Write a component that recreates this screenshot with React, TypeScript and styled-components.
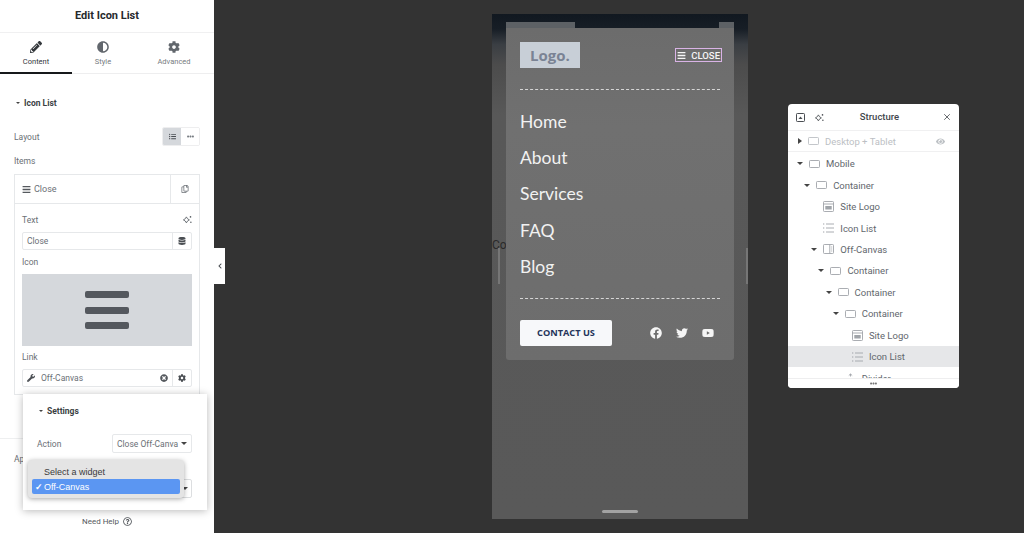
import React from "react";
import styled, { createGlobalStyle } from "styled-components";
import { X } from "lucide-react";
import {
  FaAdjust,
  FaBars,
  FaCog,
  FaDatabase,
  FaEllipsisH,
  FaEye,
  FaFacebook,
  FaListUl,
  FaPencilAlt,
  FaRegCopy,
  FaRegQuestionCircle,
  FaTimesCircle,
  FaTwitter,
  FaWrench,
  FaYoutube,
  FaChevronLeft,
} from "react-icons/fa";

const GlobalStyle = createGlobalStyle`
  html, body {
    margin: 0;
    padding: 0;
    background: #333333;
  }
  * {
    box-sizing: border-box;
  }
`;

const Page = styled.div`
  width: 1024px;
  height: 533px;
  display: flex;
  overflow: hidden;
  font-family: Roboto, "Liberation Sans", sans-serif;
  color: #555b61;
`;

/* ---------- left editor panel ---------- */

const Sidebar = styled.aside`
  position: relative;
  width: 214px;
  flex-shrink: 0;
  background: #ffffff;
  display: flex;
  flex-direction: column;
  overflow: hidden;
`;

const PanelTitle = styled.div`
  height: 33px;
  display: flex;
  align-items: center;
  justify-content: center;
  padding-bottom: 2px;
  font-size: 11px;
  font-weight: 700;
  color: #26292c;
  border-bottom: 1px solid #f0f0f1;
`;

const Tabs = styled.div`
  height: 41px;
  display: grid;
  grid-template-columns: 72px 62px 80px;
  border-bottom: 1px solid #eeeeef;
`;

const Tab = styled.div<{ $active?: boolean }>`
  display: flex;
  flex-direction: column;
  align-items: center;
  padding-top: 8px;
  gap: 4px;
  font-size: 7.5px;
  color: ${(p) => (p.$active ? "#33373b" : "#777c82")};
  border-bottom: 2px solid ${(p) => (p.$active ? "#17191b" : "transparent")};
  height: 41px;
  svg {
    font-size: 12px;
    color: ${(p) => (p.$active ? "#33373b" : "#62676d")};
  }
`;

const PanelBody = styled.div`
  padding: 23px 14px 0;
  display: flex;
  flex-direction: column;
`;

const SectionTitle = styled.div`
  height: 12px;
  display: flex;
  align-items: center;
  gap: 4px;
  padding-left: 2px;
  font-size: 8.5px;
  font-weight: 700;
  color: #3b3f44;
`;

const Caret = styled.span<{ $dir?: "down" | "right"; $size?: number }>`
  display: inline-block;
  flex-shrink: 0;
  width: 0;
  height: 0;
  ${(p) =>
    p.$dir === "right"
      ? `border-top: 3.5px solid transparent; border-bottom: 3.5px solid transparent; border-left: 4px solid #444;`
      : `border-left: ${p.$size ?? 2.5}px solid transparent; border-right: ${p.$size ?? 2.5}px solid transparent; border-top: ${p.$size ?? 2.5}px solid #444;`}
`;

const Label = styled.div`
  font-size: 8.5px;
  color: #6b7076;
  line-height: 12px;
`;

const LayoutRow = styled.div`
  display: flex;
  align-items: center;
  justify-content: space-between;
  margin-top: 18px;
  height: 19px;
`;

const ButtonGroup = styled.div`
  display: flex;
  width: 38px;
  height: 19px;
  border: 1px solid #eeeeef;
  border-radius: 2px;
  overflow: hidden;
`;

const GroupButton = styled.div<{ $active?: boolean }>`
  flex: 1;
  display: flex;
  align-items: center;
  justify-content: center;
  font-size: 7px;
  color: ${(p) => (p.$active ? "#4a4e53" : "#777c82")};
  background: ${(p) => (p.$active ? "#d5d8dc" : "#ffffff")};
`;

const ItemsLabel = styled(Label)`
  margin-top: 9px;
`;

const Repeater = styled.div`
  margin-top: 7px;
  height: 221px;
  border: 1px solid #e6e8ea;
  display: flex;
  flex-direction: column;
`;

const RepeaterHead = styled.div`
  height: 29px;
  flex-shrink: 0;
  display: flex;
  align-items: center;
  border-bottom: 1px solid #e6e8ea;
  font-size: 9px;
  color: #6b7076;
`;

const RepeaterName = styled.div`
  flex: 1;
  display: flex;
  align-items: center;
  gap: 3px;
  padding-left: 7px;
  svg {
    font-size: 9px;
    color: #55595e;
  }
`;

const RepeaterAction = styled.div`
  width: 29px;
  height: 100%;
  display: flex;
  align-items: center;
  justify-content: center;
  border-left: 1px solid #e6e8ea;
  font-size: 8px;
  color: #6b7076;
`;

const RepeaterBody = styled.div`
  padding: 9px 7px 0;
  display: flex;
  flex-direction: column;
`;

const FieldHead = styled.div`
  display: flex;
  align-items: center;
  justify-content: space-between;
  height: 13px;
`;

const Field = styled.div`
  margin-top: 6px;
  height: 18px;
  display: flex;
  align-items: center;
  border: 1px solid #e6e8ea;
  border-radius: 2px;
  font-size: 8.5px;
  color: #6b7076;
`;

const FieldText = styled.div`
  flex: 1;
  display: flex;
  align-items: center;
  gap: 6px;
  padding-left: 4px;
  svg {
    font-size: 8px;
    color: #4a4e53;
  }
`;

const FieldAction = styled.div`
  width: 19px;
  height: 100%;
  display: flex;
  align-items: center;
  justify-content: center;
  border-left: 1px solid #e6e8ea;
  font-size: 8px;
  color: #4a4e53;
`;

const ClearIcon = styled(FaTimesCircle)`
  font-size: 8px;
  color: #55595e;
  margin-right: 4px;
`;

const IconLabel = styled(Label)`
  margin-top: 6px;
`;

const LinkLabel = styled(Label)`
  margin-top: 5px;
`;

const IconPreview = styled.div`
  margin-top: 6px;
  height: 72px;
  background: #d5d8dc;
  display: flex;
  flex-direction: column;
  align-items: center;
  justify-content: center;
  gap: 8.5px;
`;

const PreviewBar = styled.div`
  width: 44px;
  height: 7px;
  border-radius: 2px;
  background: #54585e;
`;

const LowerRule = styled.div`
  margin-top: 43px;
  margin-left: -14px;
  border-top: 1px solid #eeeff0;
`;

const ApplyLabel = styled(Label)`
  margin-top: 14px;
  white-space: nowrap;
`;

const HelpLink = styled.div`
  position: absolute;
  left: 0;
  right: 0;
  top: 517px;
  display: flex;
  justify-content: center;
  align-items: center;
  gap: 4px;
  font-size: 8px;
  color: #55595e;
  svg {
    font-size: 9px;
  }
`;

const Popover = styled.div`
  position: absolute;
  left: 23px;
  top: 394px;
  width: 184px;
  height: 116px;
  background: #ffffff;
  box-shadow: 0 1px 8px rgba(0, 0, 0, 0.28);
  padding: 11px 15px 0 14px;
  z-index: 2;
`;

const ActionRow = styled.div`
  margin-top: 17px;
  height: 19px;
  display: flex;
  align-items: center;
  justify-content: space-between;
`;

const SelectBox = styled.div`
  width: 80px;
  height: 19px;
  display: flex;
  align-items: center;
  justify-content: space-between;
  padding: 0 4px;
  border: 1px solid #e6e8ea;
  border-radius: 2px;
  font-size: 8.5px;
  color: #6b7076;
  white-space: nowrap;
  overflow: hidden;
`;

const WidgetSelect = styled.div`
  margin-top: 26px;
  height: 19px;
  border: 1px solid #dcdee0;
  border-radius: 2px;
  display: flex;
  align-items: center;
  justify-content: flex-end;
  padding-right: 3px;
`;

const NativeMenu = styled.div`
  position: absolute;
  left: 5px;
  top: 66px;
  width: 156px;
  height: 38px;
  padding: 4px;
  border-radius: 4px;
  background: #e4e4e4;
  box-shadow: 0 1px 5px rgba(0, 0, 0, 0.35);
  font-size: 9px;
  font-family: "Liberation Sans", Arial, sans-serif;
  color: #3a3a3a;
`;

const NativeOption = styled.div<{ $selected?: boolean }>`
  height: 15px;
  display: flex;
  align-items: center;
  padding-left: 12px;
  position: relative;
  border-radius: 2px;
  color: ${(p) => (p.$selected ? "#ffffff" : "#3a3a3a")};
  background: ${(p) => (p.$selected ? "#5b96f2" : "transparent")};
`;

const CheckMark = styled.span`
  position: absolute;
  left: 3px;
  font-weight: 700;
`;

/* ---------- collapse tab ---------- */

const CollapseTab = styled.div`
  position: absolute;
  left: 214px;
  top: 248px;
  width: 11px;
  height: 36px;
  background: #ffffff;
  display: flex;
  align-items: center;
  justify-content: center;
  font-size: 6px;
  color: #4a4e53;
  z-index: 3;
`;

/* ---------- canvas and phone preview ---------- */

const Canvas = styled.main`
  flex: 1;
  display: flex;
  justify-content: center;
  padding: 14px 0 0 2px;
  background: #333333;
`;

const Phone = styled.div`
  position: relative;
  width: 256px;
  height: 505px;
  padding: 14px 14px 0;
  background: linear-gradient(#111820 0, #171e26 3%, #3a3e43 6%, #4c4c4c 10%, #585858 20%, #595959 100%);
`;

const OverflowText = styled.span`
  position: absolute;
  left: 0;
  top: 224px;
  font-size: 12px;
  line-height: 14px;
  color: #2a2a2a;
`;

const ScrollHandle = styled.div<{ $side: "left" | "right" }>`
  position: absolute;
  top: 234px;
  ${(p) => (p.$side === "left" ? "left: 6px;" : "right: 0;")}
  width: 2px;
  height: 36px;
  background: #767676;
`;

const HomeBar = styled.div`
  position: absolute;
  left: 110px;
  bottom: 6px;
  width: 36px;
  height: 3px;
  border-radius: 2px;
  background: #a2a2a2;
`;

const OffCanvas = styled.div`
  position: relative;
  width: 228px;
  height: 332px;
  padding: 14px;
  border-radius: 0 0 3px 3px;
  background: linear-gradient(#6c6c6c, #707070 30%, #6d6d6d);

  &::before,
  &::after {
    content: "";
    position: absolute;
    top: -6px;
    height: 6px;
    background: #5d6165;
  }
  &::before {
    left: 0;
    width: 69px;
  }
  &::after {
    right: 0;
    width: 15px;
  }
`;

const TopRow = styled.div`
  display: flex;
  align-items: center;
  justify-content: space-between;
`;

const LogoBox = styled.div`
  width: 60px;
  height: 26px;
  background: #c8cfd7;
  display: flex;
  align-items: center;
  justify-content: center;
  font-family: "Open Sans", sans-serif;
  font-weight: 700;
  font-size: 15px;
  color: #7a8394;
`;

const CloseButton = styled.div`
  width: 47px;
  height: 14px;
  margin-right: -2px;
  display: flex;
  align-items: center;
  justify-content: space-between;
  padding: 0 1px;
  border: 1px solid #d9b3e6;
  font-size: 9.5px;
  font-weight: 500;
  color: #f5f5f5;
  svg {
    font-size: 9px;
  }
`;

const DashedRule = styled.div`
  border-top: 1px dashed #d6d6d6;
`;

const TopRule = styled(DashedRule)`
  margin-top: 21px;
`;

const BottomRule = styled(DashedRule)`
  margin-top: 13px;
`;

const Menu = styled.nav`
  margin-top: 13px;
  display: flex;
  flex-direction: column;
`;

const MenuItem = styled.div`
  height: 36.4px;
  display: flex;
  align-items: center;
  font-family: Lato, sans-serif;
  font-size: 17.5px;
  color: #f2f2f2;
`;

const FooterRow = styled.div`
  margin-top: 21px;
  display: flex;
  align-items: center;
  justify-content: space-between;
`;

const ContactButton = styled.div`
  width: 92px;
  height: 26px;
  border-radius: 2px;
  background: #f7f8fa;
  display: flex;
  align-items: center;
  justify-content: center;
  font-family: "Open Sans", sans-serif;
  font-size: 9.2px;
  font-weight: 700;
  color: #24345a;
`;

const Socials = styled.div`
  display: flex;
  align-items: center;
  gap: 14px;
  padding-right: 6px;
  font-size: 12px;
  color: #f5f5f5;
`;

/* ---------- structure window ---------- */

const StructureWindow = styled.section`
  position: absolute;
  left: 788px;
  top: 104px;
  width: 171px;
  height: 284px;
  border-radius: 4px;
  background: #ffffff;
  display: flex;
  flex-direction: column;
  overflow: hidden;
`;

const WindowHead = styled.header`
  position: relative;
  height: 27px;
  flex-shrink: 0;
  display: flex;
  align-items: center;
  padding: 0 7px 0 8px;
  gap: 10px;
  border-bottom: 1px solid #f0f0f1;
  color: #4a4e53;
`;

const WindowTitle = styled.div`
  position: absolute;
  left: 0;
  right: 0;
  top: 7px;
  text-align: center;
  font-size: 9.5px;
  font-weight: 500;
  padding-left: 12px;
  color: #43474c;
`;

const WindowClose = styled(X)`
  margin-left: auto;
  width: 10px;
  height: 10px;
`;

const DesktopRow = styled.div`
  height: 21px;
  flex-shrink: 0;
  display: flex;
  align-items: center;
  padding: 0 14px 0 10px;
  gap: 6px;
  border-bottom: 1px solid #f0f0f1;
  font-size: 9.5px;
  color: #bcc0c4;
  svg:last-child {
    margin-left: auto;
    font-size: 9px;
  }
`;

const Tree = styled.div`
  flex: 1;
  padding-top: 1px;
  overflow: hidden;
`;

const TreeRow = styled.div<{ $indent: number; $selected?: boolean }>`
  height: 21.45px;
  display: flex;
  align-items: center;
  padding-left: ${(p) => 9 + p.$indent * 7.15}px;
  font-size: 9.5px;
  color: #62676d;
  background: ${(p) => (p.$selected ? "#e6e7e9" : "transparent")};
`;

const CaretSlot = styled.span`
  width: 10px;
  flex-shrink: 0;
  display: flex;
`;

const TreeIcon = styled.span`
  width: 13px;
  height: 11px;
  margin: 0 5px 0 1px;
  flex-shrink: 0;
  display: flex;
  align-items: center;
  justify-content: center;
  color: #a0a4a9;
`;

const WindowFoot = styled.footer`
  height: 10px;
  flex-shrink: 0;
  display: flex;
  align-items: center;
  justify-content: center;
  border-top: 1px solid #eeeeef;
  background: #ffffff;
  font-size: 7px;
  color: #777;
`;

/* ---------- drawn icons ---------- */

const Sparkle = ({ size = 9 }: { size?: number }) => (
  <svg width={size} height={size} viewBox="0 0 12 12" fill="currentColor">
    <path d="M4.5 2.5 6 5l2.5 1.5L6 8 4.5 10.5 3 8 .5 6.5 3 5z" fill="none" stroke="currentColor" strokeWidth="1.1" />
    <circle cx="10" cy="2.5" r="1.1" />
    <circle cx="10.5" cy="9.5" r="1" />
  </svg>
);

const ContainerIcon = () => (
  <svg width="11" height="8" viewBox="0 0 11 8" fill="none" stroke="currentColor" strokeWidth="0.9">
    <rect x="0.5" y="0.5" width="10" height="7" rx="0.8" />
  </svg>
);

const LogoIcon = () => (
  <svg width="11" height="11" viewBox="0 0 11 11" fill="none" stroke="currentColor" strokeWidth="0.9">
    <rect x="0.5" y="0.5" width="10" height="10" rx="0.8" />
    <path d="M.5 3h10" />
    <rect x="2.3" y="5" width="6.4" height="3.5" fill="currentColor" stroke="none" />
  </svg>
);

const ListIcon = () => (
  <svg width="11" height="10" viewBox="0 0 11 10" fill="none" stroke="currentColor" strokeWidth="0.9">
    <path d="M3 1h8M3 5h8M3 9h8" />
    <path d="M0 1h1.3M0 5h1.3M0 9h1.3" strokeWidth="1.2" />
  </svg>
);

const OffCanvasIcon = () => (
  <svg width="11" height="10" viewBox="0 0 11 10" fill="none" stroke="currentColor" strokeWidth="0.9">
    <rect x="0.5" y="0.5" width="10" height="9" rx="0.8" />
    <path d="M6.8.5v9M8.2 3h1M8.2 5h1M8.2 7h1" />
  </svg>
);

const DividerIcon = () => (
  <svg width="11" height="10" viewBox="0 0 11 10" fill="none" stroke="currentColor" strokeWidth="0.9">
    <path d="M5.5 1v2.5M3.8 2.5 5.5 1l1.7 1.5M0 5.5h11" />
  </svg>
);

const NavigatorIcon = () => (
  <svg width="9" height="9" viewBox="0 0 9 9" fill="none" stroke="currentColor">
    <rect x="0.5" y="0.5" width="8" height="8" rx="0.8" />
    <path d="M2.5 6 4.5 3.5 6.5 6z" fill="currentColor" stroke="none" />
  </svg>
);

type TreeKind = "container" | "logo" | "list" | "offcanvas" | "divider";

const treeIcons: Record<TreeKind, React.ReactNode> = {
  container: <ContainerIcon />,
  logo: <LogoIcon />,
  list: <ListIcon />,
  offcanvas: <OffCanvasIcon />,
  divider: <DividerIcon />,
};

const treeRows: { label: string; indent: number; kind: TreeKind; open?: boolean; selected?: boolean }[] = [
  { label: "Mobile", indent: 0, kind: "container", open: true },
  { label: "Container", indent: 1, kind: "container", open: true },
  { label: "Site Logo", indent: 2, kind: "logo" },
  { label: "Icon List", indent: 2, kind: "list" },
  { label: "Off-Canvas", indent: 2, kind: "offcanvas", open: true },
  { label: "Container", indent: 3, kind: "container", open: true },
  { label: "Container", indent: 4, kind: "container", open: true },
  { label: "Container", indent: 5, kind: "container", open: true },
  { label: "Site Logo", indent: 6, kind: "logo" },
  { label: "Icon List", indent: 6, kind: "list", selected: true },
  { label: "Divider", indent: 5, kind: "divider" },
];

const menuItems = ["Home", "About", "Services", "FAQ", "Blog"];

export default function App() {
  return (
    <Page>
      <GlobalStyle />
      <Sidebar>
        <PanelTitle>Edit Icon List</PanelTitle>
        <Tabs>
          <Tab $active>
            <FaPencilAlt />
            Content
          </Tab>
          <Tab>
            <FaAdjust />
            Style
          </Tab>
          <Tab>
            <FaCog />
            Advanced
          </Tab>
        </Tabs>
        <PanelBody>
          <SectionTitle>
            <Caret />
            Icon List
          </SectionTitle>
          <LayoutRow>
            <Label>Layout</Label>
            <ButtonGroup>
              <GroupButton $active>
                <FaListUl />
              </GroupButton>
              <GroupButton>
                <FaEllipsisH />
              </GroupButton>
            </ButtonGroup>
          </LayoutRow>
          <ItemsLabel>Items</ItemsLabel>
          <Repeater>
            <RepeaterHead>
              <RepeaterName>
                <FaBars />
                Close
              </RepeaterName>
              <RepeaterAction>
                <FaRegCopy />
              </RepeaterAction>
            </RepeaterHead>
            <RepeaterBody>
              <FieldHead>
                <Label>Text</Label>
                <Sparkle />
              </FieldHead>
              <Field>
                <FieldText>Close</FieldText>
                <FieldAction>
                  <FaDatabase />
                </FieldAction>
              </Field>
              <IconLabel>Icon</IconLabel>
              <IconPreview>
                <PreviewBar />
                <PreviewBar />
                <PreviewBar />
              </IconPreview>
              <LinkLabel>Link</LinkLabel>
              <Field>
                <FieldText>
                  <FaWrench />
                  Off-Canvas
                </FieldText>
                <ClearIcon />
                <FieldAction>
                  <FaCog />
                </FieldAction>
              </Field>
            </RepeaterBody>
          </Repeater>
          <LowerRule />
          <ApplyLabel>Ap</ApplyLabel>
        </PanelBody>
        <HelpLink>
          Need Help <FaRegQuestionCircle />
        </HelpLink>
        <Popover>
          <SectionTitle>
            <Caret />
            Settings
          </SectionTitle>
          <ActionRow>
            <Label>Action</Label>
            <SelectBox>
              Close Off-Canva
              <Caret $size={3} />
            </SelectBox>
          </ActionRow>
          <WidgetSelect>
            <Caret $size={3} />
          </WidgetSelect>
          <NativeMenu>
            <NativeOption>Select a widget</NativeOption>
            <NativeOption $selected>
              <CheckMark>✓</CheckMark>
              Off-Canvas
            </NativeOption>
          </NativeMenu>
        </Popover>
      </Sidebar>
      <CollapseTab>
        <FaChevronLeft />
      </CollapseTab>

      <Canvas>
        <Phone>
          <OverflowText>Co</OverflowText>
          <ScrollHandle $side="left" />
          <ScrollHandle $side="right" />
          <OffCanvas>
            <TopRow>
              <LogoBox>Logo.</LogoBox>
              <CloseButton>
                <FaBars />
                CLOSE
              </CloseButton>
            </TopRow>
            <TopRule />
            <Menu>
              {menuItems.map((item) => (
                <MenuItem key={item}>{item}</MenuItem>
              ))}
            </Menu>
            <BottomRule />
            <FooterRow>
              <ContactButton>CONTACT US</ContactButton>
              <Socials>
                <FaFacebook />
                <FaTwitter />
                <FaYoutube />
              </Socials>
            </FooterRow>
          </OffCanvas>
          <HomeBar />
        </Phone>
      </Canvas>

      <StructureWindow>
        <WindowHead>
          <NavigatorIcon />
          <Sparkle />
          <WindowTitle>Structure</WindowTitle>
          <WindowClose />
        </WindowHead>
        <DesktopRow>
          <Caret $dir="right" />
          <ContainerIcon />
          Desktop + Tablet
          <FaEye />
        </DesktopRow>
        <Tree>
          {treeRows.map((row, i) => (
            <TreeRow key={i} $indent={row.indent} $selected={row.selected}>
              <CaretSlot>{row.open && <Caret $size={3} />}</CaretSlot>
              <TreeIcon>{treeIcons[row.kind]}</TreeIcon>
              {row.label}
            </TreeRow>
          ))}
        </Tree>
        <WindowFoot>
          <FaEllipsisH />
        </WindowFoot>
      </StructureWindow>
    </Page>
  );
}
